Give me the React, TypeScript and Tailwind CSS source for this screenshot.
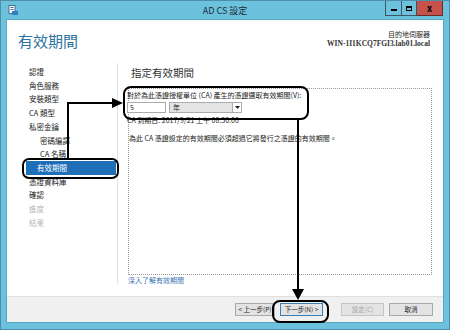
import React from 'react';

const FONT = { fontFamily: '"Noto Sans CJK TC", "Liberation Sans", sans-serif' };

const NAV = [
  { label: '認證', indent: false, state: 'normal' },
  { label: '角色服務', indent: false, state: 'normal' },
  { label: '安裝類型', indent: false, state: 'normal' },
  { label: 'CA 類型', indent: false, state: 'normal' },
  { label: '私密金鑰', indent: false, state: 'normal' },
  { label: '密碼編譯', indent: true, state: 'normal' },
  { label: 'CA 名稱', indent: true, state: 'normal' },
  { label: '有效期間', indent: true, state: 'active' },
  { label: '憑證資料庫', indent: false, state: 'normal' },
  { label: '確認', indent: false, state: 'normal' },
  { label: '進度', indent: false, state: 'disabled' },
  { label: '結果', indent: false, state: 'disabled' },
];

const TitleBar: React.FC = () => (
  <div className="h-[18px] flex items-center relative shrink-0">
    <svg className="absolute left-[7px] top-[4px]" width="10" height="10" viewBox="0 0 10 10">
      <rect x="1" y="0.5" width="6" height="8" fill="#fff" stroke="#4a6d8c" strokeWidth="1" />
      <rect x="2.5" y="2" width="3" height="1" fill="#4a6d8c" />
      <rect x="2.5" y="4" width="3" height="1" fill="#4a6d8c" />
      <rect x="4" y="6" width="6" height="4" fill="#2f7fc1" />
    </svg>
    <div className="flex-1 text-center text-[9px] text-[#1d2b36] pt-[2px]">AD CS 設定</div>
    <div className="absolute right-[6px] top-0 flex h-[15px]">
      <div className="w-[17px] border border-[#3d5566] border-t-0 flex items-center justify-center">
        <div className="w-[6px] h-[2px] bg-black mt-[3px]" />
      </div>
      <div className="w-[15px] border border-[#3d5566] border-t-0 border-l-0 flex items-center justify-center">
        <div className="w-[6px] h-[5px] border border-black border-t-2" />
      </div>
      <div className="w-[26px] bg-[#c6524c] border border-[#6b2a26] border-t-0 border-l-0 flex items-center justify-center text-[9px] font-bold text-black leading-none">
        x
      </div>
    </div>
  </div>
);

const Btn: React.FC<{ label: string; primary?: boolean; disabled?: boolean; w: string }> = ({ label, primary, disabled, w }) => (
  <div
    className={`${w} h-[13px] flex items-center justify-center whitespace-nowrap text-[6.5px] leading-none border bg-[#e3e3e3] ${
      primary ? 'border-[#3b7fb5] text-[#222]' : disabled ? 'border-[#c5c5c5] text-[#a8a8a8]' : 'border-[#a9a9a9] text-[#222]'
    }`}
  >
    {label}
  </div>
);

const App: React.FC = () => {
  return (
    <div className="w-[450px] h-[330px] bg-[#6cc2dc] relative flex flex-col border border-[#4d8fa8]" style={FONT}>
      <TitleBar />
      <div className="mx-[5px] flex-1 flex flex-col bg-white border border-[#5aa7c2]">
        <div className="flex-1 flex flex-col">
          {/* header */}
          <div className="h-[43px] flex justify-between px-[11px] shrink-0">
            <div className="text-[15px] text-[#2d739f] mt-[13px] leading-none">有效期間</div>
            <div className="flex flex-col items-end mt-[9px] text-[7px] leading-[10px] text-[#222] mr-[2px]">
              <span>目的地伺服器</span>
              <span style={{ fontFamily: '"Liberation Serif", serif' }} className="text-[7.5px] font-bold text-[#333]">
                WIN-1I1KCQ7FGI3.lab01.local
              </span>
            </div>
          </div>
          <div className="flex-1 flex">
            {/* nav */}
            <div className="w-[111px] border-r border-[#e2e2e2] pt-[2px] mb-[12px] shrink-0">
              {NAV.map((n) => (
                <div
                  key={n.label}
                  className={`h-[13.7px] flex items-center text-[7.5px] leading-none ${
                    n.state === 'active'
                      ? 'bg-[#1e6fb7] text-white ml-[19px] mr-[1px] pl-[11px]'
                      : n.state === 'disabled'
                      ? 'text-[#b8b8b8] pl-[22px]'
                      : n.indent
                      ? 'text-[#222] pl-[33px]'
                      : 'text-[#222] pl-[22px]'
                  }`}
                >
                  {n.label}
                </div>
              ))}
            </div>
            {/* main */}
            <div className="flex-1 flex flex-col pl-[10px] pr-[11px]">
              <div className="text-[10.5px] text-[#333] leading-none mt-[5px] ml-[3px]">指定有效期間</div>
              <div className="mt-[9px] h-[187px] border border-dotted border-[#9a9a9a] flex flex-col text-[7px] text-[#222] leading-none">
                <div className="mt-[3px] ml-[-2px]">對於為此憑證授權單位 (CA) 產生的憑證選取有效期間(V):</div>
                <div className="flex gap-[3px] mt-[3px] ml-[-2px]">
                  <div className="w-[39px] h-[11px] border border-[#ababab] bg-white flex items-center pl-[2px]">5</div>
                  <div className="w-[73px] h-[11px] border border-[#acacac] bg-[#e4e4e4] flex items-center justify-between pl-[3px]">
                    <span>年</span>
                    <div className="w-[9px] h-[9px] bg-white border-l border-[#acacac] flex items-center justify-center">
                      <svg width="5" height="3" viewBox="0 0 5 3">
                        <polygon points="0,0 5,0 2.5,3" fill="#222" />
                      </svg>
                    </div>
                  </div>
                </div>
                <div className="mt-[4px] ml-[-2px]">CA 到期日: 2017/9/21 上午 08:50:00</div>
                <div className="mt-[11px]">為此 CA 憑證設定的有效期間必須超過它將發行之憑證的有效期間。</div>
              </div>
              <div className="text-[7px] text-[#3a72b3] leading-none mt-[2px]">深入了解有效期間</div>
            </div>
          </div>
        </div>
        {/* footer */}
        <div className="h-[26px] bg-[#f0f0f0] border-t border-[#e0e0e0] flex items-center justify-end pr-[10px] shrink-0">
          <Btn label="< 上一步(P)" w="w-[40px]" />
          <div className="w-[5px]" />
          <Btn label="下一步(N) >" primary w="w-[43px]" />
          <div className="w-[18px]" />
          <Btn label="設定(C)" disabled w="w-[43px]" />
          <div className="w-[5px]" />
          <Btn label="取消" w="w-[44px]" />
        </div>
      </div>
      <div className="h-[6px] shrink-0" />

      {/* callout annotations */}
      <svg className="absolute left-[-1px] top-[-1px] pointer-events-none" width="450" height="330" viewBox="0 0 450 330">
        <g fill="none" stroke="#000" strokeWidth="2">
          <rect x="23" y="159" width="95" height="19" rx="6" />
          <rect x="124" y="87" width="184" height="32" rx="7" />
          <rect x="273" y="301" width="55" height="21" rx="7" />
          <path d="M68 159 V103 H114" />
          <path d="M298 119 V290" />
        </g>
        <polygon points="112,98 123,103 112,108" fill="#000" />
        <polygon points="292,289 304,289 298,300" fill="#000" />
      </svg>
    </div>
  );
};

export default App;
